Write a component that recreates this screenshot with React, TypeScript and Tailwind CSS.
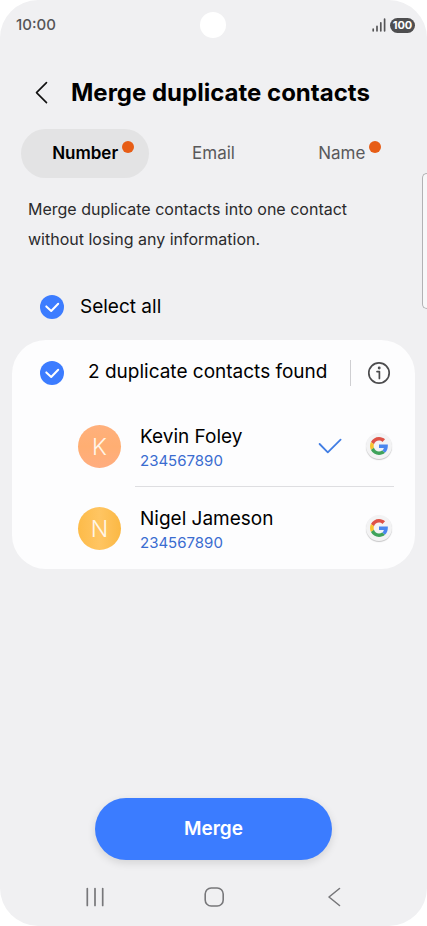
import { useState } from "react";

type Contact = { name: string; phone: string; initial: string; tone: string };

const contacts: Contact[] = [
  { name: "Kevin Foley", phone: "234567890", initial: "K", tone: "bg-linear-to-b from-[#ffb07c] via-[#ffae72] to-[#ffad80]" },
  { name: "Nigel Jameson", phone: "234567890", initial: "N", tone: "bg-linear-to-r from-[#fdbb48] via-[#ffc562] to-[#fbb843]" },
];

const tabs = [
  { label: "Number", alert: true },
  { label: "Email", alert: false },
  { label: "Name", alert: true },
];

function RoundCheckbox({ id, checked, onChange }: { id: string; checked: boolean; onChange: () => void }) {
  return (
    <span className="grid size-6 shrink-0">
      <input
        id={id}
        type="checkbox"
        checked={checked}
        onChange={onChange}
        className="peer col-start-1 row-start-1 size-6 appearance-none rounded-full border-2 border-gray-400 checked:border-0 checked:bg-[#3c7cff]"
      />
      <svg
        viewBox="0 0 24 24"
        className="pointer-events-none col-start-1 row-start-1 size-6 opacity-0 peer-checked:opacity-100"
        fill="none"
        stroke="#fff"
        strokeWidth="2"
        strokeLinecap="round"
        strokeLinejoin="round"
      >
        <path d="M6.3 11.4 L11.2 16 L18.2 8.7" />
      </svg>
    </span>
  );
}

function GoogleBadge() {
  return (
    <span className="flex size-[26px] shrink-0 items-center justify-center rounded-full bg-[#f3f3f4] shadow-[0_1px_1px_rgba(0,0,0,0.22)]">
      <svg viewBox="0 0 48 48" className="size-[18px]" role="img" aria-label="Google account">
        <path fill="#de5246" d="M24 9.5c3.54 0 6.71 1.22 9.21 3.6l6.85-6.85C35.9 2.38 30.47 0 24 0 14.62 0 6.51 5.38 2.56 13.22l7.98 6.19C12.43 13.72 17.74 9.5 24 9.5z" />
        <path fill="#4a86ee" d="M47.5 20H24v9.02h12.94c-.58 2.96-2.26 5.48-4.78 7.18l7.73 6C44.4 38.02 47.5 31.84 47.5 24z" />
        <path fill="#f8c42f" d="M10.53 28.59c-.48-1.45-.76-2.99-.76-4.59s.27-3.14.76-4.59l-7.98-6.19C.92 16.46 0 20.12 0 24s.92 7.54 2.56 10.78z" />
        <path fill="#3fa35b" d="M24 48c6.48 0 11.93-2.13 15.89-5.81l-7.73-6c-2.15 1.45-4.92 2.3-8.16 2.3-6.26 0-11.57-4.22-13.47-9.91l-7.98 6.19C6.51 42.62 14.62 48 24 48z" />
      </svg>
    </span>
  );
}

function StatusBar() {
  return (
    <div className="grid h-12 grid-cols-3 items-center px-3 pt-0.5 text-[#555557]">
      <span className="pl-1 text-[15px] font-medium">10:00</span>
      <span className="size-[26px] justify-self-center rounded-full bg-white" />
      <span className="flex items-center gap-1 justify-self-end">
        <svg viewBox="0 0 14 14" className="size-3.5" stroke="currentColor" strokeWidth="1.7" strokeLinecap="round" aria-label="Signal" role="img">
          <path d="M1.2 11.2v1.6M5 8.4V12.8M8.8 4.8V12.8M12.6 1.2V12.8" />
        </svg>
        <span className="flex h-[15px] w-[25px] items-center justify-center rounded-full bg-[#4e4e50] text-[11px] font-bold text-white">
          100
        </span>
      </span>
    </div>
  );
}

export default function App() {
  const [active, setActive] = useState("Number");
  const [selected, setSelected] = useState(true);
  const toggle = () => setSelected((value) => !value);

  return (
    <div className="min-h-screen bg-white font-['Inter','Noto_Sans',sans-serif]">
      <div className="relative flex min-h-screen flex-col overflow-hidden rounded-[38px] bg-[#f0f0f2] text-black">
        <StatusBar />

        <header className="flex h-[81px] items-center gap-[19px] px-8 pt-2">
          <button type="button" aria-label="Back">
            <svg viewBox="0 0 20 24" className="h-6 w-5" fill="none" stroke="#111" strokeWidth="1.6" strokeLinecap="round" strokeLinejoin="round">
              <path d="M14.5 1.6 L4.5 11.6 L14.5 21.6" />
            </svg>
          </button>
          <h1 className="text-2xl font-bold">Merge duplicate contacts</h1>
        </header>

        <div role="tablist" className="grid grid-cols-3 px-[21px]">
          {tabs.map(({ label, alert }) => (
            <button
              key={label}
              type="button"
              role="tab"
              aria-selected={active === label}
              onClick={() => setActive(label)}
              className={`flex h-[49px] items-center justify-center rounded-full text-[17px] ${
                active === label ? "bg-[#e3e3e4] font-semibold text-black" : "text-[#59595b]"
              }`}
            >
              <span className="relative">
                {label}
                {alert && <span className="absolute top-0 left-full ml-1 size-3 rounded-full bg-[#e75d16]" />}
              </span>
            </button>
          ))}
        </div>

        <p className="px-7 pt-4 text-base leading-[30px] text-[#2a2a2c]">
          Merge duplicate contacts into one contact
          <br />
          without losing any information.
        </p>

        <div className="flex h-[86px] items-center gap-4 px-10 pt-5">
          <RoundCheckbox id="all" checked={selected} onChange={toggle} />
          <label htmlFor="all" className="text-[19px]">Select all</label>
        </div>

        <main className="mx-3 rounded-[34px] bg-[#fdfdfe]">
          <div className="flex h-[65px] items-center pr-6 pl-7">
            <RoundCheckbox id="group" checked={selected} onChange={toggle} />
            <label htmlFor="group" className="flex-1 pl-6 text-[19px] whitespace-nowrap">2 duplicate contacts found</label>
            <button type="button" aria-label="Information" className="flex h-[26px] items-center border-l border-[#cfcfd2] pl-4">
              <svg viewBox="0 0 24 24" className="size-6" fill="none" stroke="#4c4c4e" strokeWidth="1.7" strokeLinecap="round" strokeLinejoin="round">
                <circle cx="12" cy="12" r="10.2" />
                <path d="M10 10.6H12.4V17.4" />
                <circle cx="12.2" cy="7" r="0.6" fill="#4c4c4e" />
              </svg>
            </button>
          </div>
          <ul>
            {contacts.map((contact, index) => (
              <li key={contact.name} className="flex h-[82px] items-center pr-[21px] pl-[66px]">
                <span className={`flex size-[43px] shrink-0 items-center justify-center rounded-full pt-0.5 text-[23px] font-light text-[#fff6e8] ${contact.tone}`}>
                  {contact.initial}
                </span>
                <div className={`ml-3.5 flex h-full flex-1 items-center pr-0.5 pl-[5px] ${index === 0 ? "border-b border-[#dedee1]" : ""}`}>
                  <div className="flex-1 pt-1.5">
                    <div className="text-[19px] leading-6">{contact.name}</div>
                    <div className="text-[15px] leading-6 text-[#3a6cd0]">{contact.phone}</div>
                  </div>
                  {index === 0 && (
                    <svg viewBox="0 0 24 16" className="mr-6 h-4 w-6" fill="none" stroke="#427ee4" strokeWidth="1.8" strokeLinecap="round" strokeLinejoin="round" aria-label="Primary contact" role="img">
                      <path d="M1.6 6 L9.8 14.4 L22.6 1.6" />
                    </svg>
                  )}
                  <GoogleBadge />
                </div>
              </li>
            ))}
          </ul>
        </main>

        <div className="mt-auto px-[95px] pt-10">
          <button type="button" className="h-[62px] w-full rounded-full bg-[#3b7cff] text-[19px] font-semibold text-white shadow-[0_3px_8px_rgba(0,0,0,0.12)]">
            Merge
          </button>
        </div>

        <nav className="flex h-[66px] items-center justify-between px-[83px] pt-2 text-[#77777a]">
          <button type="button" aria-label="Recent apps">
            <svg viewBox="0 0 24 24" className="size-6" fill="none" stroke="currentColor" strokeWidth="1.7" strokeLinecap="round">
              <path d="M4.3 3.5V20.5M12 3.5V20.5M19.7 3.5V20.5" />
            </svg>
          </button>
          <button type="button" aria-label="Home">
            <svg viewBox="0 0 24 24" className="size-6" fill="none" stroke="currentColor" strokeWidth="1.6">
              <rect x="3.2" y="3" width="18" height="18" rx="6" />
            </svg>
          </button>
          <button type="button" aria-label="Go back">
            <svg viewBox="0 0 24 24" className="size-6" fill="none" stroke="currentColor" strokeWidth="1.6" strokeLinecap="round" strokeLinejoin="round">
              <path d="M19.5 3.5 L9 12 L19.5 20.5" />
            </svg>
          </button>
        </nav>

        <div className="absolute top-[173px] right-0 h-[136px] w-[5px] rounded-l-md border border-r-0 border-[#b2b2b4] bg-[#f8f8f9]" />
      </div>
    </div>
  );
}
